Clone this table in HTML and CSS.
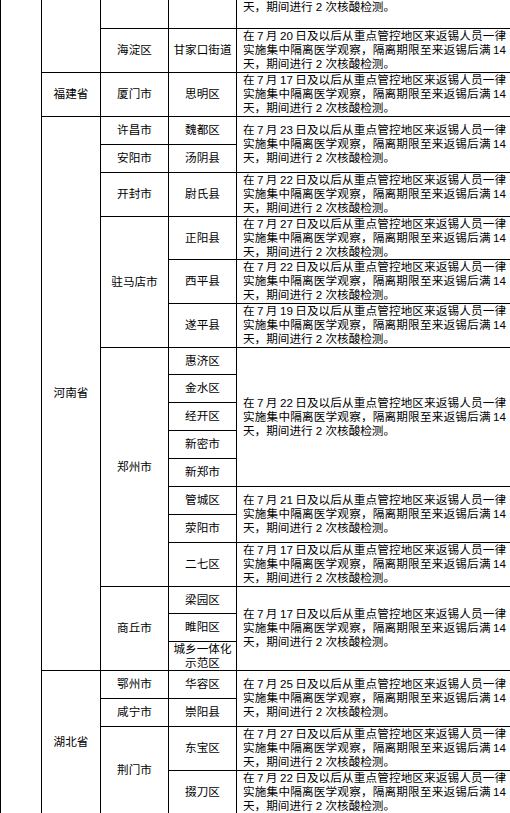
FILE: index.html
```html
<!DOCTYPE html>
<html lang="zh-CN">
<head>
<meta charset="utf-8">
<title>管控地区来返锡人员管理措施</title>
<link rel="stylesheet" href="styles.css">
</head>
<body>
<table class="grid">
<colgroup><col class="w1"><col class="w2"><col class="w3"><col class="w4"><col class="w5"></colgroup>
<tbody>
<tr class="h28 first">
  <td class="lab" rowspan="24"></td>
  <td class="lab" rowspan="2"></td>
  <td class="lab"></td>
  <td class="lab"></td>
  <td class="note top"><span class="ln">天，期间进行 2 次核酸检测。</span></td>
</tr>
<tr class="h44">
  <td class="lab">海淀区</td>
  <td class="lab">甘家口街道</td>
  <td class="note"><span class="ln j">在 7 月 20 日及以后从重点管控地区来返锡人员一律</span><span class="ln j">实施集中隔离医学观察，隔离期限至来返锡后满 14</span><span class="ln">天，期间进行 2 次核酸检测。</span></td>
</tr>
<tr class="h44">
  <td class="lab">福建省</td>
  <td class="lab">厦门市</td>
  <td class="lab">思明区</td>
  <td class="note"><span class="ln j">在 7 月 17 日及以后从重点管控地区来返锡人员一律</span><span class="ln j">实施集中隔离医学观察，隔离期限至来返锡后满 14</span><span class="ln">天，期间进行 2 次核酸检测。</span></td>
</tr>
<tr class="h28">
  <td class="lab" rowspan="17">河南省</td>
  <td class="lab">许昌市</td>
  <td class="lab">魏都区</td>
  <td class="note" rowspan="2"><span class="ln j">在 7 月 23 日及以后从重点管控地区来返锡人员一律</span><span class="ln j">实施集中隔离医学观察，隔离期限至来返锡后满 14</span><span class="ln">天，期间进行 2 次核酸检测。</span></td>
</tr>
<tr class="h28">
  <td class="lab">安阳市</td>
  <td class="lab">汤阴县</td>
</tr>
<tr class="h44">
  <td class="lab">开封市</td>
  <td class="lab">尉氏县</td>
  <td class="note"><span class="ln j">在 7 月 22 日及以后从重点管控地区来返锡人员一律</span><span class="ln j">实施集中隔离医学观察，隔离期限至来返锡后满 14</span><span class="ln">天，期间进行 2 次核酸检测。</span></td>
</tr>
<tr class="h43">
  <td class="lab" rowspan="3">驻马店市</td>
  <td class="lab">正阳县</td>
  <td class="note"><span class="ln j">在 7 月 27 日及以后从重点管控地区来返锡人员一律</span><span class="ln j">实施集中隔离医学观察，隔离期限至来返锡后满 14</span><span class="ln">天，期间进行 2 次核酸检测。</span></td>
</tr>
<tr class="h44">
  <td class="lab">西平县</td>
  <td class="note"><span class="ln j">在 7 月 22 日及以后从重点管控地区来返锡人员一律</span><span class="ln j">实施集中隔离医学观察，隔离期限至来返锡后满 14</span><span class="ln">天，期间进行 2 次核酸检测。</span></td>
</tr>
<tr class="h44">
  <td class="lab">遂平县</td>
  <td class="note"><span class="ln j">在 7 月 19 日及以后从重点管控地区来返锡人员一律</span><span class="ln j">实施集中隔离医学观察，隔离期限至来返锡后满 14</span><span class="ln">天，期间进行 2 次核酸检测。</span></td>
</tr>
<tr class="h27">
  <td class="lab" rowspan="8">郑州市</td>
  <td class="lab">惠济区</td>
  <td class="note" rowspan="5"><span class="ln j">在 7 月 22 日及以后从重点管控地区来返锡人员一律</span><span class="ln j">实施集中隔离医学观察，隔离期限至来返锡后满 14</span><span class="ln">天，期间进行 2 次核酸检测。</span></td>
</tr>
<tr class="h28"><td class="lab">金水区</td></tr>
<tr class="h28"><td class="lab">经开区</td></tr>
<tr class="h28"><td class="lab">新密市</td></tr>
<tr class="h28"><td class="lab">新郑市</td></tr>
<tr class="h28">
  <td class="lab">管城区</td>
  <td class="note" rowspan="2"><span class="ln j">在 7 月 21 日及以后从重点管控地区来返锡人员一律</span><span class="ln j">实施集中隔离医学观察，隔离期限至来返锡后满 14</span><span class="ln">天，期间进行 2 次核酸检测。</span></td>
</tr>
<tr class="h28"><td class="lab">荥阳市</td></tr>
<tr class="h44">
  <td class="lab">二七区</td>
  <td class="note"><span class="ln j">在 7 月 17 日及以后从重点管控地区来返锡人员一律</span><span class="ln j">实施集中隔离医学观察，隔离期限至来返锡后满 14</span><span class="ln">天，期间进行 2 次核酸检测。</span></td>
</tr>
<tr class="h27">
  <td class="lab" rowspan="3">商丘市</td>
  <td class="lab">梁园区</td>
  <td class="note" rowspan="3"><span class="ln j">在 7 月 17 日及以后从重点管控地区来返锡人员一律</span><span class="ln j">实施集中隔离医学观察，隔离期限至来返锡后满 14</span><span class="ln">天，期间进行 2 次核酸检测。</span></td>
</tr>
<tr class="h28"><td class="lab">睢阳区</td></tr>
<tr class="h29"><td class="lab">城乡一体化<br>示范区</td></tr>
<tr class="h28">
  <td class="lab" rowspan="4">湖北省</td>
  <td class="lab">鄂州市</td>
  <td class="lab">华容区</td>
  <td class="note" rowspan="2"><span class="ln j">在 7 月 25 日及以后从重点管控地区来返锡人员一律</span><span class="ln j">实施集中隔离医学观察，隔离期限至来返锡后满 14</span><span class="ln">天，期间进行 2 次核酸检测。</span></td>
</tr>
<tr class="h28">
  <td class="lab">咸宁市</td>
  <td class="lab">崇阳县</td>
</tr>
<tr class="h44">
  <td class="lab" rowspan="2">荆门市</td>
  <td class="lab">东宝区</td>
  <td class="note"><span class="ln j">在 7 月 27 日及以后从重点管控地区来返锡人员一律</span><span class="ln j">实施集中隔离医学观察，隔离期限至来返锡后满 14</span><span class="ln">天，期间进行 2 次核酸检测。</span></td>
</tr>
<tr class="h44">
  <td class="lab">掇刀区</td>
  <td class="note"><span class="ln j">在 7 月 22 日及以后从重点管控地区来返锡人员一律</span><span class="ln j">实施集中隔离医学观察，隔离期限至来返锡后满 14</span><span class="ln">天，期间进行 2 次核酸检测。</span></td>
</tr>
</tbody>
</table>
</body>
</html>
```
FILE: styles.css
```css
html, body {
  margin: 0;
  padding: 0;
  background: #fff;
  overflow: hidden;
}
body {
  font-family: "Liberation Sans", "Noto Sans CJK SC", sans-serif;
  font-size: 11.6px;
  line-height: 14px;
  color: #000;
}
.grid {
  border-collapse: collapse;
  table-layout: fixed;
  width: 511px;
}
.w1 { width: 41px; }
.w2 { width: 59px; }
.w3 { width: 68px; }
.w4 { width: 68px; }
.w5 { width: 275px; }
.grid td {
  border: 1px solid #000;
  padding: 0;
  vertical-align: middle;
}
.first td { border-top: 0; }
.h27 { height: 27px; }
.h28 { height: 28px; }
.h29 { height: 29px; }
.h43 { height: 43px; }
.h44 { height: 44px; }
.lab {
  text-align: center;
  padding: 0 2px;
}
.grid td.note {
  padding: 0 5px 0 6px;
  text-align: left;
}
.grid td.top { vertical-align: top; }
.ln { display: block; }
.j {
  text-align: justify;
  text-align-last: justify;
  word-spacing: -1px;
}
```
